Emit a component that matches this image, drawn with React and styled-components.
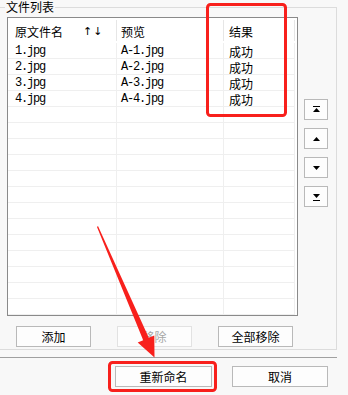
import React from "react";
import styled, { createGlobalStyle } from "styled-components";

const Global = createGlobalStyle`
  html, body { margin: 0; padding: 0; background: #f8f8f8; }
  body {
    font-family: "Noto Sans CJK SC", "Liberation Sans", sans-serif;
    font-size: 12px;
    color: #000;
  }
`;

const Page = styled.div`
  position: relative;
  width: 348px;
  height: 395px;
  overflow: hidden;
  background: #f8f8f8;
  display: flex;
  flex-direction: column;
`;

const Group = styled.section`
  position: relative;
  box-sizing: border-box;
  margin: 7px 0 0 -2px;
  width: 339px;
  height: 343px;
  border: 1px solid #dcdcdc;
  padding: 9px 8px 0 8px;
  display: flex;
  gap: 6px;
`;

const Legend = styled.div`
  position: absolute;
  top: -8px;
  left: 6px;
  padding: 0 1px;
  background: #f8f8f8;
  line-height: 14px;
  font-size: 12px;
  color: #000;
`;

const MainCol = styled.div`
  display: flex;
  flex-direction: column;
  gap: 10px;
`;

const List = styled.div`
  box-sizing: border-box;
  width: 291px;
  height: 299px;
  border: 1px solid #8a8a8a;
  background: #fff;
  display: flex;
  flex-direction: column;
  overflow: hidden;
`;

const HeaderRow = styled.div`
  display: flex;
  height: 25px;
  flex: none;
`;

const HeaderCell = styled.div`
  position: relative;
  box-sizing: border-box;
  width: ${(p) => p.$w}px;
  padding-left: ${(p) => p.$pad}px;
  padding-top: 2px;
  display: flex;
  align-items: center;
  font-size: 12px;
  &::after {
    content: "";
    position: absolute;
    right: 0;
    top: 2px;
    bottom: 2px;
    width: 1px;
    background: #e6e6e6;
  }
`;

const SortArrows = styled.span`
  margin-left: 20px;
  font-family: "DejaVu Sans", sans-serif;
  font-size: 11px;
  letter-spacing: 1px;
`;

const Row = styled.div`
  display: flex;
  height: 16px;
  flex: none;
`;

const Cell = styled.div`
  box-sizing: border-box;
  width: ${(p) => p.$w}px;
  height: 16px;
  padding-left: ${(p) => p.$pad}px;
  padding-top: 2px;
  border-right: 1px solid #efefef;
  border-bottom: 1px solid #efefef;
  line-height: 13px;
  white-space: nowrap;
  font-family: ${(p) =>
    p.$mono ? `"Liberation Mono", monospace` : `"Noto Sans CJK SC", sans-serif`};
  font-size: 12px;
  letter-spacing: ${(p) => (p.$mono ? "-1.2px" : "0")};
`;

const BtnRow = styled.div`
  display: flex;
  gap: 26px;
  padding-left: 9px;
`;

const Button = styled.button`
  box-sizing: border-box;
  width: ${(p) => p.$w}px;
  height: 21px;
  margin: 0;
  padding: 0;
  border: 1px solid ${(p) => (p.disabled ? "#e2e2e2" : "#b9b9b9")};
  background: #fdfdfd;
  color: ${(p) => (p.disabled ? "#a6a6a6" : "#000")};
  font-family: "Noto Sans CJK SC", sans-serif;
  font-size: 12px;
  line-height: 19px;
  display: flex;
  align-items: center;
  justify-content: center;
`;

const SideCol = styled.div`
  display: flex;
  flex-direction: column;
  gap: 8px;
  padding-top: 82px;
`;

const SideButton = styled.button`
  box-sizing: border-box;
  width: 24px;
  height: 21px;
  margin: 0;
  padding: 0;
  border: 1px solid #b9b9b9;
  background: #fdfdfd;
  display: flex;
  align-items: center;
  justify-content: center;
`;

const Separator = styled.div`
  margin-top: 7px;
  width: 337px;
  height: 1px;
  background: #a0a0a0;
  flex: none;
`;

const Footer = styled.div`
  display: flex;
  gap: 20px;
  margin-top: 8px;
  padding-left: 115px;
`;

const Overlay = styled.svg`
  position: absolute;
  left: 0;
  top: 0;
  pointer-events: none;
`;

const MoveIcon = ({ kind }) => (
  <svg width="9" height="8" viewBox="0 0 9 8">
    {kind === "top" && (
      <>
        <rect x="1" y="0" width="7" height="1" fill="#000" />
        <path d="M4.5 2 L8 6 L1 6 Z" fill="#000" />
      </>
    )}
    {kind === "up" && <path d="M4.5 2 L8 6 L1 6 Z" fill="#000" />}
    {kind === "down" && <path d="M1 2 L8 2 L4.5 6 Z" fill="#000" />}
    {kind === "bottom" && (
      <>
        <path d="M1 1 L8 1 L4.5 5 Z" fill="#000" />
        <rect x="1" y="7" width="7" height="1" fill="#000" />
      </>
    )}
  </svg>
);

const data = [
  ["1.jpg", "A-1.jpg", "成功"],
  ["2.jpg", "A-2.jpg", "成功"],
  ["3.jpg", "A-3.jpg", "成功"],
  ["4.jpg", "A-4.jpg", "成功"],
];

const cols = [
  { w: 109, pad: 7 },
  { w: 107, pad: 4 },
  { w: 71, pad: 5 },
];

export default function App() {
  const rows = [...data];
  while (rows.length < 17) rows.push(["", "", ""]);
  return (
    <>
      <Global />
      <Page>
        <Group>
          <Legend>文件列表</Legend>
          <MainCol>
            <List>
              <HeaderRow>
                <HeaderCell $w={cols[0].w} $pad={cols[0].pad}>
                  原文件名<SortArrows>↑↓</SortArrows>
                </HeaderCell>
                <HeaderCell $w={cols[1].w} $pad={cols[1].pad}>预览</HeaderCell>
                <HeaderCell $w={cols[2].w} $pad={cols[2].pad}>结果</HeaderCell>
              </HeaderRow>
              {rows.map((r, i) => (
                <Row key={i}>
                  <Cell $w={cols[0].w} $pad={cols[0].pad} $mono>{r[0]}</Cell>
                  <Cell $w={cols[1].w} $pad={cols[1].pad} $mono>{r[1]}</Cell>
                  <Cell $w={cols[2].w} $pad={cols[2].pad}>{r[2]}</Cell>
                </Row>
              ))}
            </List>
            <BtnRow>
              <Button $w={75}>添加</Button>
              <Button $w={75} disabled>移除</Button>
              <Button $w={75}>全部移除</Button>
            </BtnRow>
          </MainCol>
          <SideCol>
            <SideButton><MoveIcon kind="top" /></SideButton>
            <SideButton><MoveIcon kind="up" /></SideButton>
            <SideButton><MoveIcon kind="down" /></SideButton>
            <SideButton><MoveIcon kind="bottom" /></SideButton>
          </SideCol>
        </Group>
        <Separator />
        <Footer>
          <Button $w={97}>重新命名</Button>
          <Button $w={96}>取消</Button>
        </Footer>
        <Overlay width="348" height="395" viewBox="0 0 348 395">
          <rect x="207.5" y="4.5" width="78" height="111" rx="3" fill="none" stroke="#f8201c" strokeWidth="3" />
          <rect x="109.5" y="362.5" width="106" height="28" rx="3" fill="none" stroke="#f8201c" strokeWidth="3" />
          <polygon
            points="96.9,226.8 98.1,226.2 148.8,337.8 154.3,335.4 154.5,357.5 137.7,342.6 143.2,340.2"
            fill="#f8201c"
          />
        </Overlay>
      </Page>
    </>
  );
}
